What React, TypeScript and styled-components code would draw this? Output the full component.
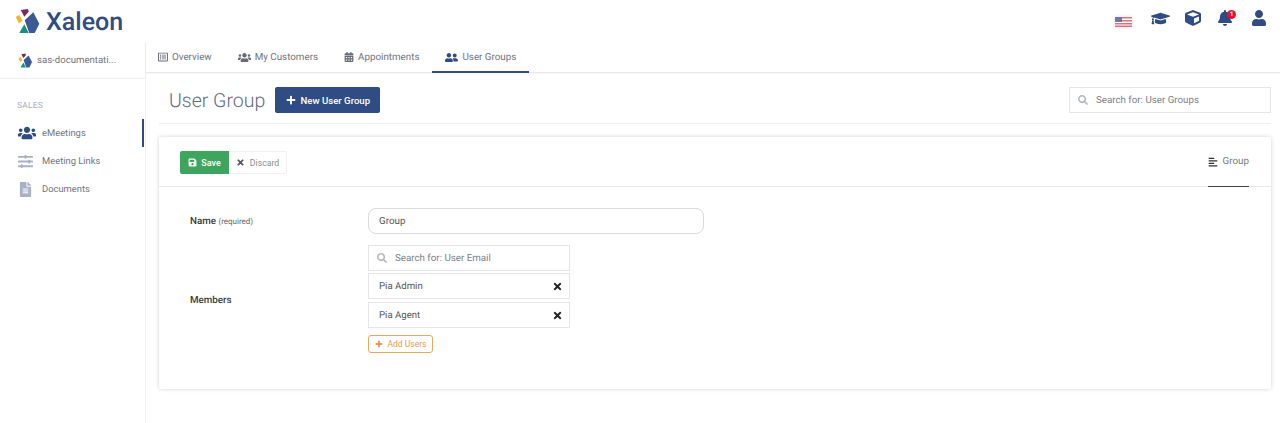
import React from "react";
import styled, { createGlobalStyle } from "styled-components";
import {
  FaAlignLeft,
  FaBell,
  FaCalendarAlt,
  FaCube,
  FaFileAlt,
  FaGraduationCap,
  FaPlus,
  FaRegListAlt,
  FaSave,
  FaSearch,
  FaSlidersH,
  FaTimes,
  FaUser,
  FaUserFriends,
  FaUsers,
} from "react-icons/fa";

const NAVY = "#2f4d84";
const GREY_TEXT = "#6f7480";

const GlobalStyle = createGlobalStyle`
  html, body { margin: 0; padding: 0; background: #fff; }
  body {
    font-family: Roboto, "Liberation Sans", sans-serif;
    color: #444;
    overflow: hidden;
    text-rendering: geometricPrecision;
  }
  * { box-sizing: border-box; }
`;

const Page = styled.div`
  width: 1280px;
  height: 423px;
  display: flex;
  flex-direction: column;
  overflow: hidden;
`;

const Header = styled.header`
  height: 42px;
  flex: none;
  display: flex;
  align-items: center;
  justify-content: space-between;
  padding: 0 13px 0 15px;
`;

const Brand = styled.div`
  display: flex;
  align-items: center;
  gap: 5px;
  color: ${NAVY};
  font-size: 25px;
  font-weight: 500;
  margin-top: 3px;

  svg {
    margin-top: -3px;
  }
`;

const HeaderIcons = styled.div`
  display: flex;
  align-items: center;
  gap: 15px;
  color: ${NAVY};
  margin-top: -6px;
`;

const HeaderIcon = styled.span<{ $after?: number }>`
  position: relative;
  display: flex;
  margin-right: ${(p) => p.$after ?? 0}px;
`;

const Badge = styled.span`
  position: absolute;
  top: 0;
  right: -3px;
  width: 9px;
  height: 9px;
  border-radius: 50%;
  background: #e8112d;
  color: #fff;
  font-size: 6.5px;
  font-weight: 700;
  line-height: 9px;
  text-align: center;
`;

const Flag = styled.svg`
  margin-right: 4px;
  margin-top: 7px;
  opacity: 0.7;
  filter: drop-shadow(0 0 2px rgba(0, 0, 0, 0.2));
`;

const Body = styled.div`
  flex: 1;
  display: flex;
  min-height: 0;
`;

const Sidebar = styled.aside`
  width: 146px;
  flex: none;
  border-right: 1px solid #eceef1;
`;

const Account = styled.div`
  height: 37px;
  display: flex;
  align-items: center;
  gap: 4px;
  padding: 0 0 0 18px;
  font-size: 9.6px;
  color: ${GREY_TEXT};
  border-bottom: 1px solid #eceef1;
`;

const SectionLabel = styled.div`
  margin: 22px 0 0 17px;
  height: 11px;
  line-height: 11px;
  font-size: 8.5px;
  color: #a9adb8;
  letter-spacing: 0.2px;
`;

const NavList = styled.nav`
  margin-top: 7px;
`;

const NavItem = styled.div<{ $active?: boolean }>`
  position: relative;
  height: 28px;
  display: flex;
  align-items: center;
  padding-left: 18px;
  font-size: 9.4px;
  color: ${GREY_TEXT};

  svg {
    font-size: ${(p) => (p.$active ? 18 : 15)}px;
    color: ${(p) => (p.$active ? NAVY : "#aab1c4")};
  }

  &::after {
    content: "";
    display: ${(p) => (p.$active ? "block" : "none")};
    position: absolute;
    right: 1px;
    top: 0;
    width: 2px;
    height: 28px;
    background: ${NAVY};
  }
`;

const NavIconSlot = styled.span`
  width: 24px;
  display: flex;
`;

const Main = styled.main`
  flex: 1;
  min-width: 0;
`;

const Tabs = styled.div`
  height: 31px;
  display: flex;
  border-bottom: 1px solid #e6e8ec;
  box-shadow: 0 1px 2px rgba(0, 0, 0, 0.04);
`;

const Tab = styled.div<{ $active?: boolean; $iconSize: number }>`
  height: 31px;
  display: flex;
  align-items: center;
  gap: 4px;
  padding: 1px 13px 0 13px;
  font-size: 9.8px;
  color: ${GREY_TEXT};
  border-bottom: 2px solid ${(p) => (p.$active ? NAVY : "transparent")};

  &:first-child {
    padding-left: 12px;
  }

  svg {
    font-size: ${(p) => p.$iconSize}px;
    color: ${(p) => (p.$active ? NAVY : "#666b75")};
  }
`;

const TitleRow = styled.div`
  height: 51px;
  margin: 0 9px 0 13px;
  padding: 4px 0 0 10px;
  display: flex;
  align-items: center;
  justify-content: space-between;
  border-bottom: 1px solid #eceef1;
`;

const TitleGroup = styled.div`
  display: flex;
  align-items: center;
  gap: 10px;
`;

const Title = styled.h1`
  margin: 0;
  font-size: 19.5px;
  font-weight: 300;
  color: #5f6c80;
`;

const NewButton = styled.button`
  width: 105px;
  height: 26px;
  border: 0;
  border-radius: 2px;
  background: ${NAVY};
  color: #fff;
  font: 500 9.6px Roboto, sans-serif;
  display: flex;
  align-items: center;
  justify-content: center;
  gap: 5px;
  padding: 0;

  svg {
    font-size: 10px;
  }
`;

const SearchBox = styled.div<{ $width: number }>`
  width: ${(p) => p.$width}px;
  height: 26px;
  flex: none;
  display: flex;
  align-items: center;
  gap: 8px;
  padding-left: 8px;
  border: 1px solid #e4e6ea;
  font-size: 9.75px;
  color: #7b7f88;

  svg {
    font-size: 10px;
    color: #b4b7bd;
  }
`;

const Card = styled.section`
  margin: 13px 9px 0 13px;
  height: 252px;
  border-radius: 2px;
  box-shadow: 0 0 4px rgba(0, 0, 0, 0.18);
`;

const CardHeader = styled.div`
  height: 50px;
  display: flex;
  align-items: flex-end;
  justify-content: space-between;
  padding: 0 22px 0 21px;
  border-bottom: 1px solid #e6e8ec;
`;

const ButtonGroup = styled.div`
  display: flex;
  align-self: center;
  margin-top: 2px;
`;

const SaveButton = styled.button`
  width: 49px;
  height: 23px;
  border: 0;
  border-radius: 2px 0 0 2px;
  background: #3da55d;
  color: #fff;
  font: 500 9px Roboto, sans-serif;
  display: flex;
  align-items: center;
  justify-content: center;
  gap: 4px;
  padding: 0;

  svg {
    font-size: 9px;
  }
`;

const DiscardButton = styled.button`
  width: 58px;
  height: 23px;
  border: 1px solid #eef0f2;
  border-left: 0;
  border-radius: 0 2px 2px 0;
  background: #fff;
  color: #8a8d94;
  font: 400 8.7px Roboto, sans-serif;
  display: flex;
  align-items: center;
  justify-content: center;
  gap: 5px;
  padding: 0;

  svg {
    font-size: 9px;
    color: #555;
  }
`;

const SideTab = styled.div`
  width: 41px;
  height: 50px;
  display: flex;
  align-items: center;
  justify-content: space-between;
  font-size: 9.8px;
  color: #777b83;
  border-bottom: 1px solid #444;
  margin-bottom: -1px;

  svg {
    font-size: 10px;
    color: #333;
  }
`;

const Form = styled.div`
  padding: 21px 0 0 31px;
`;

const FieldRow = styled.div<{ $gap?: number }>`
  display: flex;
  align-items: center;
  margin-top: ${(p) => p.$gap ?? 0}px;
`;

const FieldLabel = styled.div<{ $shift: number }>`
  width: 178px;
  margin-top: ${(p) => p.$shift}px;
  font-size: 9.8px;
  font-weight: 500;
  color: #3a3a3a;
`;

const Hint = styled.span`
  font-size: 8px;
  font-weight: 400;
  color: #666;
`;

const NameInput = styled.div`
  width: 336px;
  height: 26px;
  border: 1px solid #d8dadf;
  border-radius: 8px;
  display: flex;
  align-items: center;
  padding: 1px 0 0 10px;
  font-size: 9.8px;
  color: #555;
`;

const Members = styled.div`
  display: flex;
  flex-direction: column;
  width: 202px;
  gap: 2px;
`;

const MemberRow = styled.div`
  height: 26px;
  display: flex;
  align-items: center;
  justify-content: space-between;
  padding: 0 6px 0 10px;
  border: 1px solid #e4e6ea;
  font-size: 9.6px;
  color: #555;

  & + & {
    margin-top: 1px;
  }

  svg {
    font-size: 11px;
    color: #222;
  }
`;

const AddButton = styled.button`
  width: 65px;
  height: 18px;
  margin-top: 5px;
  border: 1px solid #e9a860;
  border-radius: 3px;
  background: #fff;
  color: #eb9a4a;
  font: 400 8.5px Roboto, sans-serif;
  display: flex;
  align-items: center;
  justify-content: center;
  gap: 5px;
  padding: 0;

  svg {
    font-size: 8px;
    color: #e8862d;
  }
`;

const Logo = ({ size }: { size: number }) => (
  <svg width={size} height={size} viewBox="3 3 26 26">
    <polygon points="12.7,15.3 21.3,7.3 27.3,18.7 22.7,28 17.3,28" fill="#3b5a93" />
    <polygon points="8.7,5 16,4 16.7,6.7 12.3,11.7" fill="#7a2a5e" />
    <polygon points="3.7,12 7.3,10 10.7,16 6.7,18.3" fill="#f2b632" />
    <polygon points="7.3,28 12.3,19.3 16.7,28" fill="#17907f" />
  </svg>
);

const navItems = [
  { label: "eMeetings", icon: <FaUsers />, active: true },
  { label: "Meeting Links", icon: <FaSlidersH /> },
  { label: "Documents", icon: <FaFileAlt /> },
];

const tabs = [
  { label: "Overview", icon: <FaRegListAlt />, size: 10 },
  { label: "My Customers", icon: <FaUsers />, size: 13 },
  { label: "Appointments", icon: <FaCalendarAlt />, size: 10 },
  { label: "User Groups", icon: <FaUserFriends />, size: 13, active: true },
];

const members = ["Pia Admin", "Pia Agent"];

export default function App() {
  return (
    <Page>
      <GlobalStyle />
      <Header>
        <Brand>
          <Logo size={26} />
          Xaleon
        </Brand>
        <HeaderIcons>
          <Flag width="17" height="10" viewBox="0 0 17 10">
            <rect width="17" height="10" fill="#fff" />
            <rect width="17" height="1.5" fill="#c8354a" />
            <rect y="3" width="17" height="1.5" fill="#c8354a" />
            <rect y="6" width="17" height="1.5" fill="#c8354a" />
            <rect y="8.5" width="17" height="1.5" fill="#c8354a" />
            <rect width="7" height="5" fill="#33407e" />
          </Flag>
          <HeaderIcon><FaGraduationCap size={19} /></HeaderIcon>
          <HeaderIcon $after={1}><FaCube size={16} /></HeaderIcon>
          <HeaderIcon $after={3}>
            <FaBell size={16} />
            <Badge>1</Badge>
          </HeaderIcon>
          <HeaderIcon><FaUser size={16} /></HeaderIcon>
        </HeaderIcons>
      </Header>
      <Body>
        <Sidebar>
          <Account>
            <Logo size={15} />
            sas-documentati...
          </Account>
          <SectionLabel>SALES</SectionLabel>
          <NavList>
            {navItems.map((item) => (
              <NavItem key={item.label} $active={item.active}>
                <NavIconSlot>{item.icon}</NavIconSlot>
                {item.label}
              </NavItem>
            ))}
          </NavList>
        </Sidebar>
        <Main>
          <Tabs>
            {tabs.map((tab) => (
              <Tab key={tab.label} $active={tab.active} $iconSize={tab.size}>
                {tab.icon}
                {tab.label}
              </Tab>
            ))}
          </Tabs>
          <TitleRow>
            <TitleGroup>
              <Title>User Group</Title>
              <NewButton><FaPlus />New User Group</NewButton>
            </TitleGroup>
            <SearchBox $width={202}><FaSearch />Search for: User Groups</SearchBox>
          </TitleRow>
          <Card>
            <CardHeader>
              <ButtonGroup>
                <SaveButton><FaSave />Save</SaveButton>
                <DiscardButton><FaTimes />Discard</DiscardButton>
              </ButtonGroup>
              <SideTab><FaAlignLeft />Group</SideTab>
            </CardHeader>
            <Form>
              <FieldRow>
                <FieldLabel $shift={1}>Name <Hint>(required)</Hint></FieldLabel>
                <NameInput>Group</NameInput>
              </FieldRow>
              <FieldRow $gap={11}>
                <FieldLabel $shift={3}>Members</FieldLabel>
                <Members>
                  <SearchBox $width={202}><FaSearch />Search for: User Email</SearchBox>
                  {members.map((m) => (
                    <MemberRow key={m}>{m}<FaTimes /></MemberRow>
                  ))}
                  <AddButton><FaPlus />Add Users</AddButton>
                </Members>
              </FieldRow>
            </Form>
          </Card>
        </Main>
      </Body>
    </Page>
  );
}
